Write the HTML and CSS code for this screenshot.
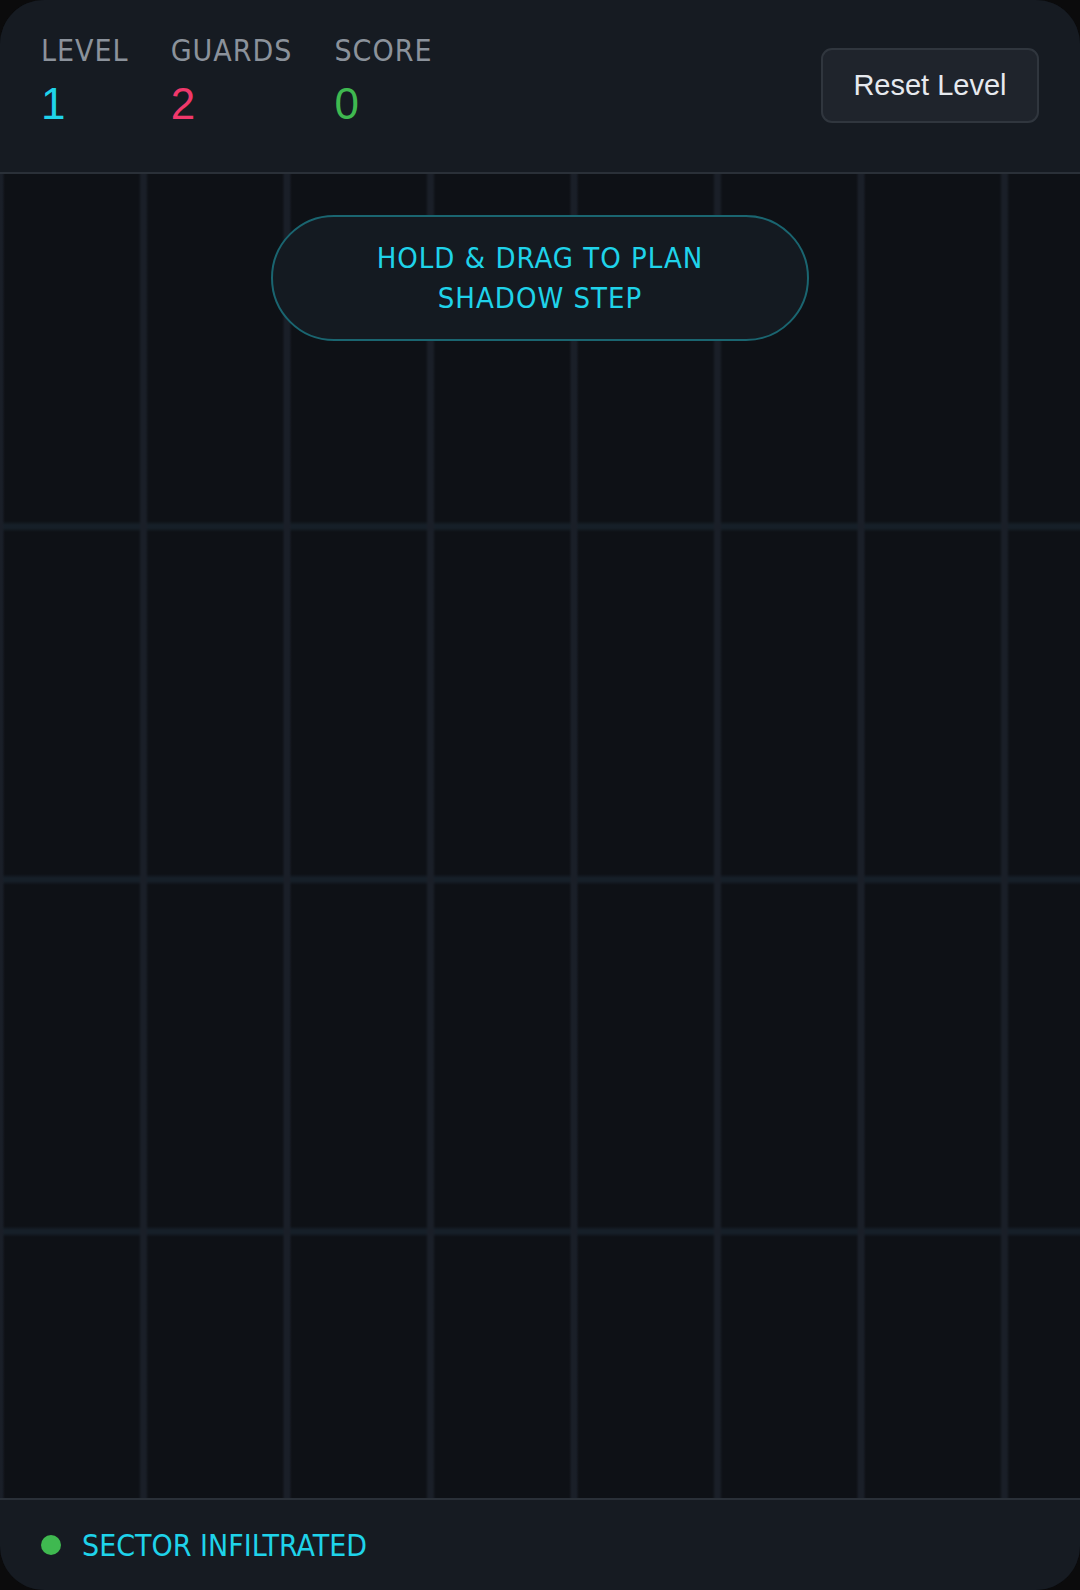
FILE: index.html
```html
<!DOCTYPE html>
<html lang="en">
<head>
    <meta charset="UTF-8">
    <meta name="viewport" content="width=device-width, initial-scale=1.0">
    <title>Shadow Step</title>
    <link rel="stylesheet" href="styles.css">
</head>
<body>
    <div class="app">
        <header class="top-bar">
            <div class="stats">
                <div class="stat">
                    <div class="stat-label">LEVEL</div>
                    <div class="stat-value level">1</div>
                </div>
                <div class="stat">
                    <div class="stat-label">GUARDS</div>
                    <div class="stat-value guards">2</div>
                </div>
                <div class="stat">
                    <div class="stat-label">SCORE</div>
                    <div class="stat-value score">0</div>
                </div>
            </div>
            <button class="reset-button">Reset Level</button>
        </header>

        <main class="board">
            <div class="hint">HOLD &amp; DRAG TO PLAN<br>SHADOW STEP</div>
        </main>

        <footer class="status-bar">
            <span class="status-dot"></span>
            <span class="status-text">SECTOR INFILTRATED</span>
        </footer>
    </div>
</body>
</html>
```

FILE: styles.css
```css
body {
    margin: 0;
    padding: 0;
    background-color: #0b0b0c;
    font-family: "DejaVu Sans Condensed", "DejaVu Sans", sans-serif;
}

.app {
    display: flex;
    flex-direction: column;
    width: 1080px;
    height: 1590px;
    border-radius: 44px;
    overflow: hidden;
    background-color: #0e1116;
}

.top-bar {
    display: flex;
    justify-content: space-between;
    align-items: flex-start;
    height: 174px;
    box-sizing: border-box;
    padding: 34px 41px 0 41px;
    background-color: #161b22;
    border-bottom: 2px solid #2a3038;
}

.stats {
    display: flex;
    gap: 42px;
}

.stat-label {
    font-size: 30px;
    line-height: 34px;
    letter-spacing: 1px;
    color: #8b929b;
}

.stat-value {
    margin-top: 12px;
    font-family: "Liberation Sans", sans-serif;
    font-size: 44px;
    line-height: 48px;
}

.stat-value.level {
    color: #1fd3ea;
}

.stat-value.guards {
    color: #f0386b;
}

.stat-value.score {
    color: #3fb950;
}

.reset-button {
    margin-top: 14px;
    width: 218px;
    height: 75px;
    background-color: #1f242c;
    border: 2px solid #30363e;
    border-radius: 11px;
    color: #e6e9ee;
    font-family: "Liberation Sans", sans-serif;
    font-size: 29px;
    cursor: pointer;
}

/* grid: columns every 143.5px, rows every 352.5px */
.board {
    position: relative;
    flex: 1;
    background-color: #0e1116;
    background-image:
        linear-gradient(90deg, #1a1f28 0, #1a1f28 2px, transparent 5px, transparent calc(100% - 5px), #1a1f28 calc(100% - 2px), #1a1f28 100%),
        linear-gradient(180deg,
            transparent 347px, #161f28 351px, #161f28 354px, transparent 358px,
            transparent 700px, #161f28 704px, #161f28 707px, transparent 711px,
            transparent 1052px, #161f28 1056px, #161f28 1059px, transparent 1063px);
    background-size: 143.5px 100%, 100% 100%;
}

.hint {
    position: absolute;
    top: 41px;
    left: 50%;
    transform: translateX(-50%);
    width: 538px;
    box-sizing: border-box;
    padding: 21px 0;
    border: 2px solid #1a6570;
    border-radius: 63px;
    background-color: #141a21;
    color: #1fd3ea;
    font-size: 29px;
    line-height: 40px;
    letter-spacing: 1px;
    text-align: center;
}

.status-bar {
    display: flex;
    align-items: center;
    gap: 21px;
    height: 92px;
    box-sizing: border-box;
    padding: 0 41px;
    background-color: #161b22;
    border-top: 2px solid #2a3038;
}

.status-dot {
    width: 20px;
    height: 20px;
    border-radius: 50%;
    background-color: #3fb950;
}

.status-text {
    color: #1fd3ea;
    font-size: 30px;
    letter-spacing: 0;
}
```
